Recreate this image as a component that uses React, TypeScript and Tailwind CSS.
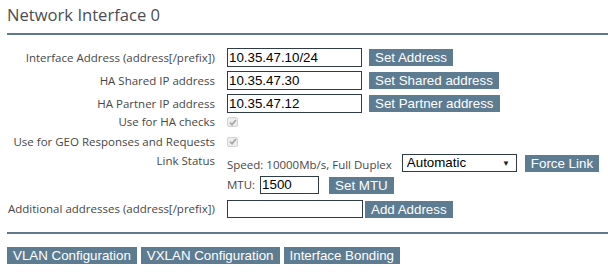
import React from 'react';

const btn =
  'bg-[#5e7c91] text-white text-[13.33px] leading-[15px] px-[6px] py-px font-["Liberation_Sans",Arial,sans-serif] whitespace-nowrap';
const inputCls =
  'border border-[#2f3c48] bg-white text-black text-[13.33px] pl-px font-["Liberation_Sans",Arial,sans-serif] outline-none';

const Label: React.FC<{ children: React.ReactNode; className?: string }> = ({ children, className }) => (
  <div className={`w-[215px] shrink-0 text-right whitespace-nowrap ${className || ''}`}>{children}</div>
);

const Check = () => (
  <span className="flex w-[11px] h-[10px] items-center justify-center rounded-[2px] border border-[#d4d4d4] bg-[#ededed]">
    <svg width="8" height="7" viewBox="0 0 8 7">
      <path d="M1 3.6 L3 5.6 L7 1" fill="none" stroke="#a9a9a9" strokeWidth="1.8" />
    </svg>
  </span>
);

export default function App() {
  return (
    <div className="w-[608px] h-[274px] bg-white overflow-hidden font-['Open_Sans',sans-serif] text-[11.5px] text-[#474747]">
      <div className="h-[33px] pl-[7px] pt-[4px] text-[16.6px] leading-[22px] text-[#4a4d55]">Network Interface 0</div>
      <div className="ml-[7px] h-[2px] bg-[#62798a]" />

      <div className="mt-[11px]">
        <div className="flex h-[23px] items-center gap-[12px]">
          <Label>Interface Address (address[/prefix])</Label>
          <input readOnly value="10.35.47.10/24" className={`${inputCls} w-[135px] h-[19px]`} />
          <button className={`${btn} -ml-[5px]`}>Set Address</button>
        </div>
        <div className="flex h-[23px] items-center gap-[12px]">
          <Label>HA Shared IP address</Label>
          <input readOnly value="10.35.47.30" className={`${inputCls} w-[135px] h-[19px]`} />
          <button className={`${btn} -ml-[5px]`}>Set Shared address</button>
        </div>
        <div className="flex h-[23px] items-center gap-[12px]">
          <Label>HA Partner IP address</Label>
          <input readOnly value="10.35.47.12" className={`${inputCls} w-[135px] h-[19px]`} />
          <button className={`${btn} -ml-[5px]`}>Set Partner address</button>
        </div>
        <div className="flex h-[14px] items-center gap-[12px]">
          <Label>Use for HA checks</Label>
          <Check />
        </div>
        <div className="flex h-[25px] items-center gap-[12px]">
          <Label>Use for GEO Responses and Requests</Label>
          <Check />
        </div>

        <div className="flex gap-[12px]">
          <Label className="leading-[12px] pt-[1px]">Link Status</Label>
          <div className="flex flex-col">
            <div className="flex h-[18px] items-center">
              <span className="pt-[3px] whitespace-nowrap">Speed: 10000Mb/s, Full Duplex</span>
              <div className="relative ml-[10px]">
                <select
                  defaultValue="auto"
                  className="appearance-none block w-[115px] h-[18px] border border-[#2f3c48] bg-white text-black text-[13.33px] leading-[16px] pl-[4px] font-['Liberation_Sans',Arial,sans-serif] outline-none"
                >
                  <option value="auto">Automatic</option>
                </select>
                <span className="pointer-events-none absolute right-[7px] top-[4px] text-[8px] leading-[10px] text-[#222]">▼</span>
              </div>
              <button className={`${btn} ml-[8px]`}>Force Link</button>
            </div>
            <div className="mt-[4px] flex h-[18px] items-center">
              <span>MTU:</span>
              <input readOnly value="1500" className={`${inputCls} ml-[5px] w-[59px] h-[18px]`} />
              <button className={`${btn} ml-[10px] py-0`}>Set MTU</button>
            </div>
          </div>
        </div>

        <div className="mt-[6px] flex h-[18px] items-center gap-[12px]">
          <Label>Additional addresses (address[/prefix])</Label>
          <input readOnly value="" className={`${inputCls} w-[136px] h-[18px]`} />
          <button className={`${btn} -ml-[10px]`}>Add Address</button>
        </div>
      </div>

      <div className="ml-[7px] mt-[14px] h-[2px] bg-[#62798a]" />

      <div className="mt-[13px] flex gap-[4px] pl-[7px]">
        <button className={btn}>VLAN Configuration</button>
        <button className={btn}>VXLAN Configuration</button>
        <button className={btn}>Interface Bonding</button>
      </div>
    </div>
  );
}
